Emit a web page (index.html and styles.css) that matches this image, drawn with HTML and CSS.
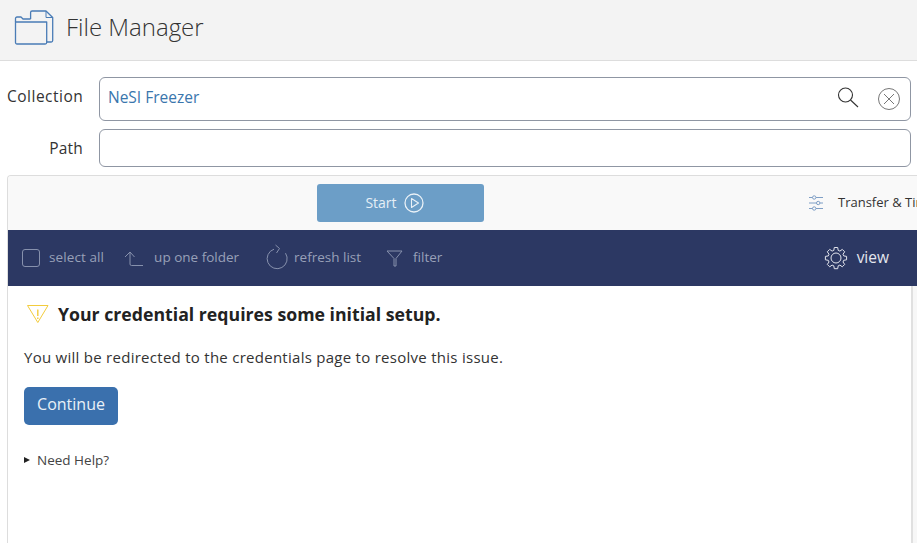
FILE: index.html
```html
<!DOCTYPE html>
<html lang="en">
<head>
<meta charset="utf-8">
<title>File Manager</title>
<link rel="stylesheet" href="styles.css">
</head>
<body>
<header class="app-header">
  <svg class="logo" width="40" height="36" viewBox="0 0 40 36" fill="none" stroke="#4a7cb6" stroke-width="1.300" stroke-linejoin="round">
    <path d="M16.600 10V3.500A1.500 1.500 0 0 1 18.100 2H32l6.700 6.500v23A1.500 1.500 0 0 1 37.200 33h-4.500"/>
    <path d="M32 2v6.500h6.700" stroke-width="1"/>
    <path d="M1.500 13V9.500A1.500 1.500 0 0 1 3 8h4l2 2h7.600"/>
    <path d="M1.500 13h31.200v20.500a1.500 1.500 0 0 1-1.500 1.500H3a1.500 1.500 0 0 1-1.500-1.500z"/>
  </svg>
  <h1 class="app-title">File Manager</h1>
</header>

<section class="fields">
  <div class="field">
    <label class="field-label field-label-collection">Collection</label>
    <div class="input input-tall">
      <span class="input-value">NeSI Freezer</span>
      <svg class="icon-search" width="24" height="24" viewBox="0 0 24 24" fill="none" stroke="#333" stroke-width="1.100">
        <circle cx="9.500" cy="9" r="7"/>
        <path d="M14.500 14l7.500 7"/>
      </svg>
      <svg class="icon-clear" width="24" height="24" viewBox="0 0 24 24" fill="none" stroke="#777" stroke-width="1">
        <circle cx="12" cy="12" r="10.500"/>
        <path d="M7 7l10 10M17 7L7 17"/>
      </svg>
    </div>
  </div>
  <div class="field">
    <label class="field-label">Path</label>
    <div class="input input-short"></div>
  </div>
</section>

<section class="panel">
  <div class="actions">
    <button class="btn-start"><span class="start-label">Start</span>
      <svg width="20" height="20" viewBox="0 0 20 20" fill="none" stroke="#fff" stroke-opacity=".85">
        <circle cx="10" cy="10" r="9" stroke-width="1.300"/>
        <path d="M7.500 5.500v9l7-4.500z" stroke-width="1.100" stroke-linejoin="round"/>
      </svg>
    </button>
    <div class="transfer">
      <svg width="16" height="18" viewBox="0 0 16 18" fill="none" stroke="#7f9fc6" stroke-width="1">
        <path d="M1 3.500h3.500M8 3.500h7M1 9h7.500M12 9h3M1 14.500h3.500M8 14.500h7"/>
        <circle cx="6.200" cy="3.500" r="1.700"/><circle cx="10.200" cy="9" r="1.700"/><circle cx="6.200" cy="14.500" r="1.700"/>
      </svg>
      <span class="transfer-label">Transfer &amp; Timer Options</span>
    </div>
  </div>

  <nav class="toolbar">
    <span class="checkbox"></span>
    <span class="tool tool-select">select all</span>
    <svg class="tool-icon icon-up" width="20" height="16" viewBox="0 0 20 16" fill="none" stroke="#8791ad" stroke-width="1">
      <path d="M1 6l5-5 4.500 5M6 1v12a1.500 1.500 0 0 0 1.500 1.500H19"/>
    </svg>
    <span class="tool tool-up">up one folder</span>
    <svg class="tool-icon icon-refresh" width="22" height="26" viewBox="0 0 22 26" fill="none" stroke="#8791ad" stroke-width="1">
      <path d="M8 5.200a10 10 0 1 0 11.500 4"/>
      <path d="M9.500 1l4 3.500-3 4.500"/>
    </svg>
    <span class="tool tool-refresh">refresh list</span>
    <svg class="tool-icon icon-filter" width="18" height="17" viewBox="0 0 18 17" fill="none" stroke="#8791ad" stroke-width="1">
      <path d="M1 1h15L10 8.500V16H8V8.500z"/>
    </svg>
    <span class="tool tool-filter">filter</span>
    <svg class="icon-gear" width="24" height="24" viewBox="0 0 24 24" fill="none" stroke="#e4e6ee" stroke-width="1">
      <circle cx="12" cy="12" r="5"/>
      <path d="M10.300 1.500h3.400l.5 2.900 1.700.7 2.400-1.700 2.400 2.400-1.700 2.400.7 1.700 2.900.5v3.400l-2.900.5-.7 1.700 1.700 2.400-2.400 2.400-2.400-1.700-1.700.7-.5 2.900h-3.400l-.5-2.900-1.700-.7-2.400 1.700-2.400-2.400 1.700-2.400-.7-1.700-2.900-.5v-3.400l2.900-.5.700-1.700-1.700-2.400 2.400-2.400 2.400 1.700 1.700-.7z" stroke-linejoin="round"/>
    </svg>
    <span class="view">view</span>
  </nav>

  <div class="message">
    <div class="message-head">
      <svg width="24" height="20" viewBox="0 0 24 20" fill="none" stroke="#f3cc3c" stroke-width="1">
        <path d="M1.500 1.500h20.500L11.800 18.500z" stroke-linejoin="round"/>
        <path d="M11.800 5.500v6.500" stroke-width="1.400"/>
        <path d="M11.800 13.500v1.500" stroke-width="1.400"/>
      </svg>
      <h2 class="message-title">Your credential requires some initial setup.</h2>
    </div>
    <p class="message-text">You will be redirected to the credentials page to resolve this issue.</p>
    <button class="btn-continue">Continue</button>
    <div class="help"><span class="help-arrow"></span>Need Help?</div>
  </div>
</section>
</body>
</html>
```
FILE: styles.css
```css
* { box-sizing: border-box; }
html, body { margin: 0; height: 543px; overflow: hidden; }
body { font-family: "Open Sans", "Lato", sans-serif; color: #333; background: #fff; }

.app-header {
  height: 61px;
  background: #f3f3f3;
  border-bottom: 1px solid #ddd;
  display: flex;
  align-items: center;
  padding-left: 14px;
}
.logo { flex: none; margin-bottom: 6px; }
.app-title { margin: 0 0 8px 12px; font-size: 24px; font-weight: 300; color: #333; }

.fields { padding: 16px 6px 0 7px; display: flex; flex-direction: column; gap: 8px; }
.field { display: flex; align-items: center; }
.field-label { width: 76px; text-align: right; font-size: 15.500px; letter-spacing: .2px; color: #333; margin-right: 16px; white-space: nowrap; }
.field-label-collection { padding-bottom: 6px; letter-spacing: .5px; }
.input { flex: 1; background: #fff; border: 1px solid #8f96a3; border-radius: 6px; display: flex; align-items: center; }
.input-tall { height: 44px; padding: 0 10px 0 8px; }
.input-short { height: 38px; }
.input-value { flex: 1; color: #3a76ad; font-size: 15.500px; padding-bottom: 4px; }
.icon-search { margin-right: 17px; margin-bottom: 3px; margin-left: 2px; }
.icon-clear { margin-right: -1px; }

.panel { margin: 8px 0 0 7px; border: 1px solid #ddd; border-radius: 4px 0 0 0; border-right: 0; border-bottom: 0; height: 368px; overflow: hidden; background: #f7f7f7; }
.actions { height: 54px; background: #f9f9f9; display: flex; align-items: flex-start; padding: 8px 0 0 309px; white-space: nowrap; }
.btn-start {
  flex: none; width: 167px; height: 38px; border: 0; border-radius: 3px; background: #6c9ec7; color: #e6eff6;
  font: 400 14px "Open Sans", sans-serif;
  display: flex; align-items: center; justify-content: center; gap: 7px; padding: 0 12px 0 0;
}
.start-label { padding-bottom: 2px; }
.transfer { display: flex; align-items: center; height: 38px; margin-left: 324px; flex: none; }
.transfer-label { margin-left: 14px; font-size: 13px; color: #333; padding-bottom: 2px; }

.toolbar { height: 56px; background: #2c3863; margin-left: -1px; display: flex; align-items: center; font-size: 13.500px; color: #98a0b8; white-space: nowrap; }
.checkbox { flex: none; width: 18px; height: 18px; border: 1px solid #8791ad; border-radius: 3px; margin-left: 15px; }
.tool { padding-bottom: 2px; }
.tool-select { margin-left: 9px; letter-spacing: .1px; }
.tool-icon { flex: none; }
.icon-up { margin-left: 20px; margin-top: 2px; }
.tool-up { margin-left: 10px; }
.icon-refresh { margin-left: 27px; margin-bottom: 3px; }
.tool-refresh { margin-left: 6px; }
.icon-filter { margin-left: 25px; }
.tool-filter { margin-left: 9px; }
.icon-gear { margin-left: auto; flex: none; }
.view { color: #e4e6ee; font-size: 15.500px; margin: 0 28px 0 9px; padding-bottom: 2px; }

.message { background: #fff; height: 100%; margin-right: 4px; border-right: 2px solid #e0e0e0; padding: 16px 0 0 16px; }
.message-head { display: flex; align-items: center; gap: 8px; margin-left: 2px; }
.message-title { margin: 0; font-size: 17.700px; font-weight: 700; color: #222; }
.message-text { margin: 21px 0 0; font-size: 15px; letter-spacing: .27px; color: #333; }
.btn-continue {
  display: block; margin-top: 20px; width: 94px; height: 38px; background: #3a70ad; color: #e9f0f7;
  border: 0; border-radius: 5px; font: 400 16px "Open Sans", sans-serif; padding: 0 0 4px;
}
.help { margin-top: 26px; font-size: 13.500px; color: #444; display: flex; align-items: center; }
.help-arrow { flex: none; width: 0; height: 0; border-left: 6px solid #222; border-top: 3.500px solid transparent; border-bottom: 3.500px solid transparent; margin-right: 7px; }
```
